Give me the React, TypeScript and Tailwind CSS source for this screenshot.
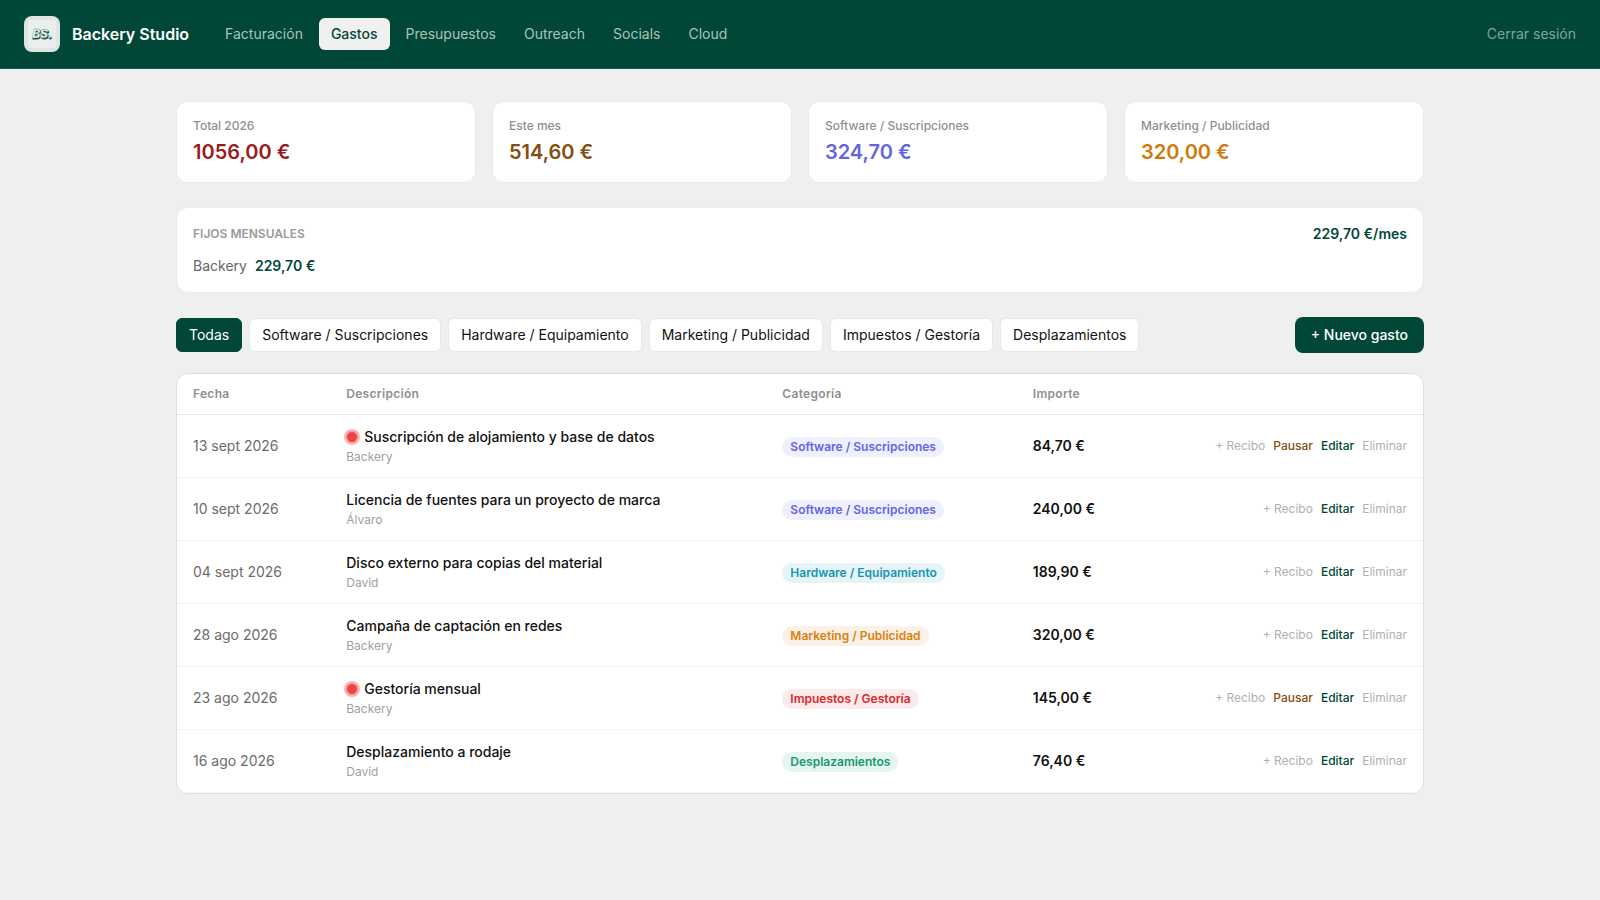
import React, { useState } from 'react';

type Category = 'software' | 'hardware' | 'marketing' | 'impuestos' | 'desplazamientos';

interface Expense {
  id: number;
  date: string;
  description: string;
  owner: string;
  category: Category;
  amount: string;
  recurring?: boolean;
}

const CATEGORIES: Record<Category, { label: string; badge: string }> = {
  software: { label: 'Software / Suscripciones', badge: 'bg-[#f0effd] text-[#6366e1]' },
  hardware: { label: 'Hardware / Equipamiento', badge: 'bg-[#e6f4f7] text-[#1595b5]' },
  marketing: { label: 'Marketing / Publicidad', badge: 'bg-[#fcf1e6] text-[#d9800f]' },
  impuestos: { label: 'Impuestos / Gestoría', badge: 'bg-[#fce9e9] text-[#d42a2f]' },
  desplazamientos: { label: 'Desplazamientos', badge: 'bg-[#e6f5f0] text-[#149a6c]' },
};

const NAV_ITEMS = ['Facturación', 'Gastos', 'Presupuestos', 'Outreach', 'Socials', 'Cloud'];

const STATS = [
  { label: 'Total 2026', value: '1056,00 €', color: 'text-[#991b1b]' },
  { label: 'Este mes', value: '514,60 €', color: 'text-[#854d0e]' },
  { label: 'Software / Suscripciones', value: '324,70 €', color: 'text-[#6366e1]' },
  { label: 'Marketing / Publicidad', value: '320,00 €', color: 'text-[#d07a0a]' },
];

const EXPENSES: Expense[] = [
  { id: 1, date: '13 sept 2026', description: 'Suscripción de alojamiento y base de datos', owner: 'Backery', category: 'software', amount: '84,70 €', recurring: true },
  { id: 2, date: '10 sept 2026', description: 'Licencia de fuentes para un proyecto de marca', owner: 'Álvaro', category: 'software', amount: '240,00 €' },
  { id: 3, date: '04 sept 2026', description: 'Disco externo para copias del material', owner: 'David', category: 'hardware', amount: '189,90 €' },
  { id: 4, date: '28 ago 2026', description: 'Campaña de captación en redes', owner: 'Backery', category: 'marketing', amount: '320,00 €' },
  { id: 5, date: '23 ago 2026', description: 'Gestoría mensual', owner: 'Backery', category: 'impuestos', amount: '145,00 €', recurring: true },
  { id: 6, date: '16 ago 2026', description: 'Desplazamiento a rodaje', owner: 'David', category: 'desplazamientos', amount: '76,40 €' },
];

const Logo: React.FC = () => (
  <svg viewBox="0 0 36 36" className="w-9 h-9 flex-shrink-0" role="img" aria-label="BS.">
    <rect width="36" height="36" rx="8" fill="#dde5e2" />
    <rect x="4" y="4" width="28" height="28" rx="2" fill="#e8efed" />
    <text
      x="18.8"
      y="22.9"
      textAnchor="middle"
      fontFamily="Inter, sans-serif"
      fontSize="12"
      fontWeight="800"
      fontStyle="italic"
      fill="#0f5243"
      stroke="#0f5243"
      strokeWidth="0.8"
    >
      BS.
    </text>
    <text
      x="18.2"
      y="22.3"
      textAnchor="middle"
      fontFamily="Inter, sans-serif"
      fontSize="12"
      fontWeight="800"
      fontStyle="italic"
      fill="#f0f5f3"
      stroke="#5c8a7e"
      strokeWidth="0.3"
    >
      BS.
    </text>
  </svg>
);

const Header: React.FC = () => (
  <header className="bg-[#004737] border-b border-[#1a5a4b] px-6 py-4 flex items-center justify-between">
    <div className="flex items-center gap-6">
      <div className="flex items-center gap-3">
        <Logo />
        <span className="text-base font-semibold text-white">Backery Studio</span>
      </div>
      <nav className="flex items-center gap-1">
        {NAV_ITEMS.map((item) => (
          <a
            key={item}
            href="#"
            className={`px-3 py-1.5 rounded-md text-sm ${
              item === 'Gastos' ? 'bg-[#f0f0f0] text-[#004737] font-medium' : 'text-[#a8c3bc]'
            }`}
          >
            {item}
          </a>
        ))}
      </nav>
    </div>
    <button type="button" className="text-sm text-[#80a39b]">
      Cerrar sesión
    </button>
  </header>
);

const ExpenseRow: React.FC<{ expense: Expense }> = ({ expense }) => {
  const category = CATEGORIES[expense.category];

  return (
    <tr className="border-b border-[#f3f3f3]">
      <td className="px-4 py-3 text-[#6b6b6b]">{expense.date}</td>
      <td className="px-4 py-3">
        <div className="flex items-center gap-1.5 font-medium text-[#111111]">
          {expense.recurring && (
            <span className="w-3 h-3 rounded-full bg-[#ef4444] border border-[#f79a9a] ring-2 ring-[#f9b4b4]" title="Gasto fijo"></span>
          )}
          {expense.description}
        </div>
        <div className="mt-0.5 text-xs text-[#a0a0a0]">{expense.owner}</div>
      </td>
      <td className="px-4 py-3">
        <span className={`inline-block px-2 py-0.5 rounded-full text-xs font-semibold ${category.badge}`}>
          {category.label}
        </span>
      </td>
      <td className="px-4 py-3 font-semibold text-[#111111]">{expense.amount}</td>
      <td className="px-4 py-3">
        <div className="flex items-center justify-end gap-2 text-xs">
          <button type="button" className="text-[#b0b0b0]">+ Recibo</button>
          {expense.recurring && (
            <button type="button" className="font-medium text-[#854d0e]">Pausar</button>
          )}
          <button type="button" className="font-medium text-[#004737]">Editar</button>
          <button type="button" className="text-[#b0b0b0]">Eliminar</button>
        </div>
      </td>
    </tr>
  );
};

const App: React.FC = () => {
  const [filter, setFilter] = useState<Category | null>(null);

  const visible = filter ? EXPENSES.filter((e) => e.category === filter) : EXPENSES;

  const filterClass = (active: boolean) =>
    `px-3 py-1.5 rounded-md border text-sm ${
      active ? 'bg-[#004737] border-[#004737] text-white' : 'bg-white border-[#e8e8e8] text-[#111111]'
    }`;

  return (
    <div className="min-h-screen bg-[#efefef] font-['Inter',sans-serif] text-sm">
      <Header />

      <main className="max-w-7xl mx-auto px-4 py-8">
        {/* Totals */}
        <div className="grid grid-cols-4 gap-4">
          {STATS.map((stat) => (
            <div key={stat.label} className="bg-white rounded-xl border border-[#ebebeb] p-4">
              <p className="text-xs font-medium text-[#8f8f8f]">{stat.label}</p>
              <p className={`mt-1 text-xl font-semibold ${stat.color}`}>{stat.value}</p>
            </div>
          ))}
        </div>

        {/* Fixed monthly costs */}
        <section className="mt-6 bg-white rounded-xl border border-[#ebebeb] p-4">
          <div className="flex items-center justify-between">
            <h2 className="text-xs font-semibold uppercase text-[#999999]">Fijos mensuales</h2>
            <span className="font-semibold text-[#004737]">229,70 €/mes</span>
          </div>
          <div className="mt-3 flex items-center gap-2">
            <span className="text-[#666666]">Backery</span>
            <span className="font-semibold text-[#004737]">229,70 €</span>
          </div>
        </section>

        {/* Filters */}
        <div className="mt-6 flex items-center justify-between">
          <div className="flex items-center gap-[7px]">
            <button type="button" className={filterClass(filter === null)} onClick={() => setFilter(null)}>
              Todas
            </button>
            {(Object.keys(CATEGORIES) as Category[]).map((key) => (
              <button key={key} type="button" className={filterClass(filter === key)} onClick={() => setFilter(key)}>
                {CATEGORIES[key].label}
              </button>
            ))}
          </div>
          <button type="button" className="px-4 py-2 rounded-lg bg-[#004737] text-sm font-medium text-white">
            + Nuevo gasto
          </button>
        </div>

        {/* Expenses */}
        <div className="mt-5 bg-white rounded-xl border border-[#dedede] overflow-hidden">
          <table className="w-full table-fixed text-left">
            <colgroup>
              <col className="w-[12.3%]" />
              <col className="w-[35%]" />
              <col className="w-[20.1%]" />
              <col className="w-[12%]" />
              <col />
            </colgroup>
            <thead>
              <tr className="border-b border-[#e8e8e8] text-xs text-[#8f8f8f]">
                <th className="px-4 py-3 font-semibold tracking-wide">Fecha</th>
                <th className="px-4 py-3 font-semibold tracking-wide">Descripción</th>
                <th className="px-4 py-3 font-semibold tracking-wide">Categoría</th>
                <th className="px-4 py-3 font-semibold tracking-wide">Importe</th>
                <th className="px-4 py-3" aria-label="Acciones"></th>
              </tr>
            </thead>
            <tbody>
              {visible.map((expense) => (
                <ExpenseRow key={expense.id} expense={expense} />
              ))}
            </tbody>
          </table>
        </div>
      </main>
    </div>
  );
};

export default App;
